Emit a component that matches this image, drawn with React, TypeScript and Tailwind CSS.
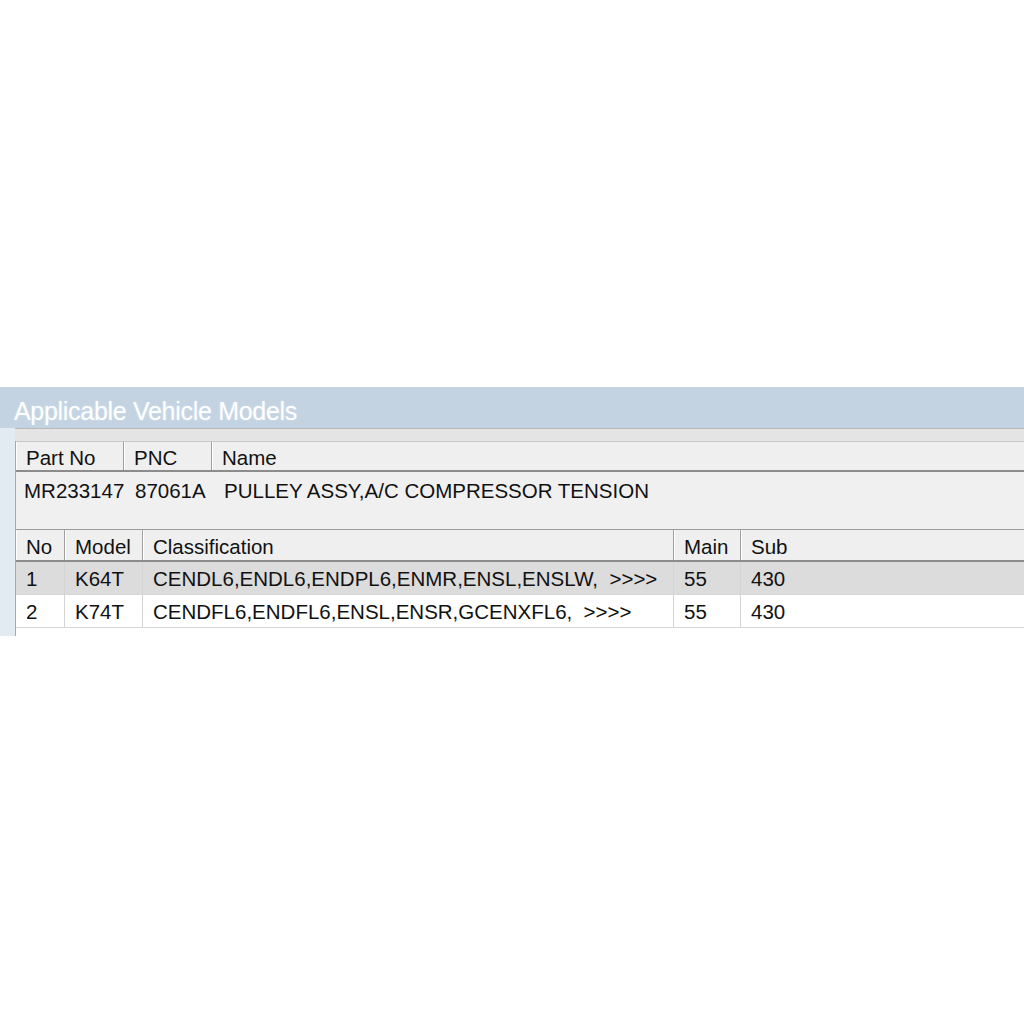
import type { ReactNode } from 'react';

const font = { fontFamily: '"Liberation Sans", Arial, sans-serif' };

function HeadCell({ width, children, last }: { width?: string; children: ReactNode; last?: boolean }) {
  return (
    <div className={`flex h-full shrink-0 items-center border-r border-r-[#a0a0a0] pl-[10px] pt-[5px] shadow-[inset_1px_0_0_#ffffff] ${last ? 'flex-1 border-r-0' : ''} ${width ?? ''}`}>
      {children}
    </div>
  );
}

function BodyCell({ width, children, last }: { width?: string; children: ReactNode; last?: boolean }) {
  return (
    <div className={`flex h-full shrink-0 items-center border-r border-r-[#d4d4d4] pl-[10px] pt-[3px] ${last ? 'flex-1 border-r-0' : ''} ${width ?? ''}`}>
      {children}
    </div>
  );
}

const models = [
  { no: '1', model: 'K64T', cls: 'CENDL6,ENDL6,ENDPL6,ENMR,ENSL,ENSLW,  >>>>', main: '55', sub: '430' },
  { no: '2', model: 'K74T', cls: 'CENDFL6,ENDFL6,ENSL,ENSR,GCENXFL6,  >>>>', main: '55', sub: '430' },
];

export default function App() {
  return (
    <div className="min-h-screen w-[1024px] overflow-hidden bg-white" style={font}>
      <div className="h-[387px]" />

      {/* window caption */}
      <div className="flex h-[41px] items-center bg-[#c3d3e2] pl-[14px] pt-[8px] text-[25px] tracking-[-0.3px] text-white [text-shadow:0_0_2px_#d8e4ee]">
        Applicable Vehicle Models
      </div>

      {/* window body */}
      <div className="flex h-[208px] bg-gradient-to-r from-[#e2eaf2] to-[#eef2f6]">
        <div className="w-[15px] shrink-0" />
        <div className="flex min-w-0 flex-1 flex-col border-t border-t-[#b8b8b8] bg-[#e4e4e4] pt-[12px]">
          <div className="flex flex-1 flex-col border-l border-l-[#a8a8a8] bg-[#f0f0f0] text-[20.5px] text-[#111]">
            {/* part header */}
            <div className="flex h-[31px] border-t border-t-[#c8c8c8] border-b-2 border-b-[#8c8c8c] bg-[#efefef]">
              <HeadCell width="w-[108px]">Part No</HeadCell>
              <HeadCell width="w-[88px]">PNC</HeadCell>
              <HeadCell last>Name</HeadCell>
            </div>
            <div className="flex h-[58px] items-start border-b border-b-[#9c9c9c] pl-[8px] pt-[4px] whitespace-pre">
              <span className="w-[111px] shrink-0">MR233147</span>
              <span className="w-[89px] shrink-0">87061A</span>
              <span>PULLEY ASSY,A/C COMPRESSOR TENSION</span>
            </div>

            {/* model header */}
            <div className="flex h-[32px] border-b-2 border-b-[#8c8c8c] bg-[#efefef]">
              <HeadCell width="w-[49px]">No</HeadCell>
              <HeadCell width="w-[78px]">Model</HeadCell>
              <HeadCell width="w-[531px]">Classification</HeadCell>
              <HeadCell width="w-[67px]">Main</HeadCell>
              <HeadCell last>Sub</HeadCell>
            </div>
            {models.map((m, i) => (
              <div key={m.no} className={`flex h-[33px] border-b border-b-[#d8d8d8] ${i === 0 ? 'bg-[#dcdcdc]' : 'bg-white'}`}>
                <BodyCell width="w-[49px]">{m.no}</BodyCell>
                <BodyCell width="w-[78px]">{m.model}</BodyCell>
                <BodyCell width="w-[531px]"><span className="whitespace-pre">{m.cls}</span></BodyCell>
                <BodyCell width="w-[67px]">{m.main}</BodyCell>
                <BodyCell last>{m.sub}</BodyCell>
              </div>
            ))}
            <div className="flex-1 bg-white" />
          </div>
        </div>
      </div>
    </div>
  );
}
